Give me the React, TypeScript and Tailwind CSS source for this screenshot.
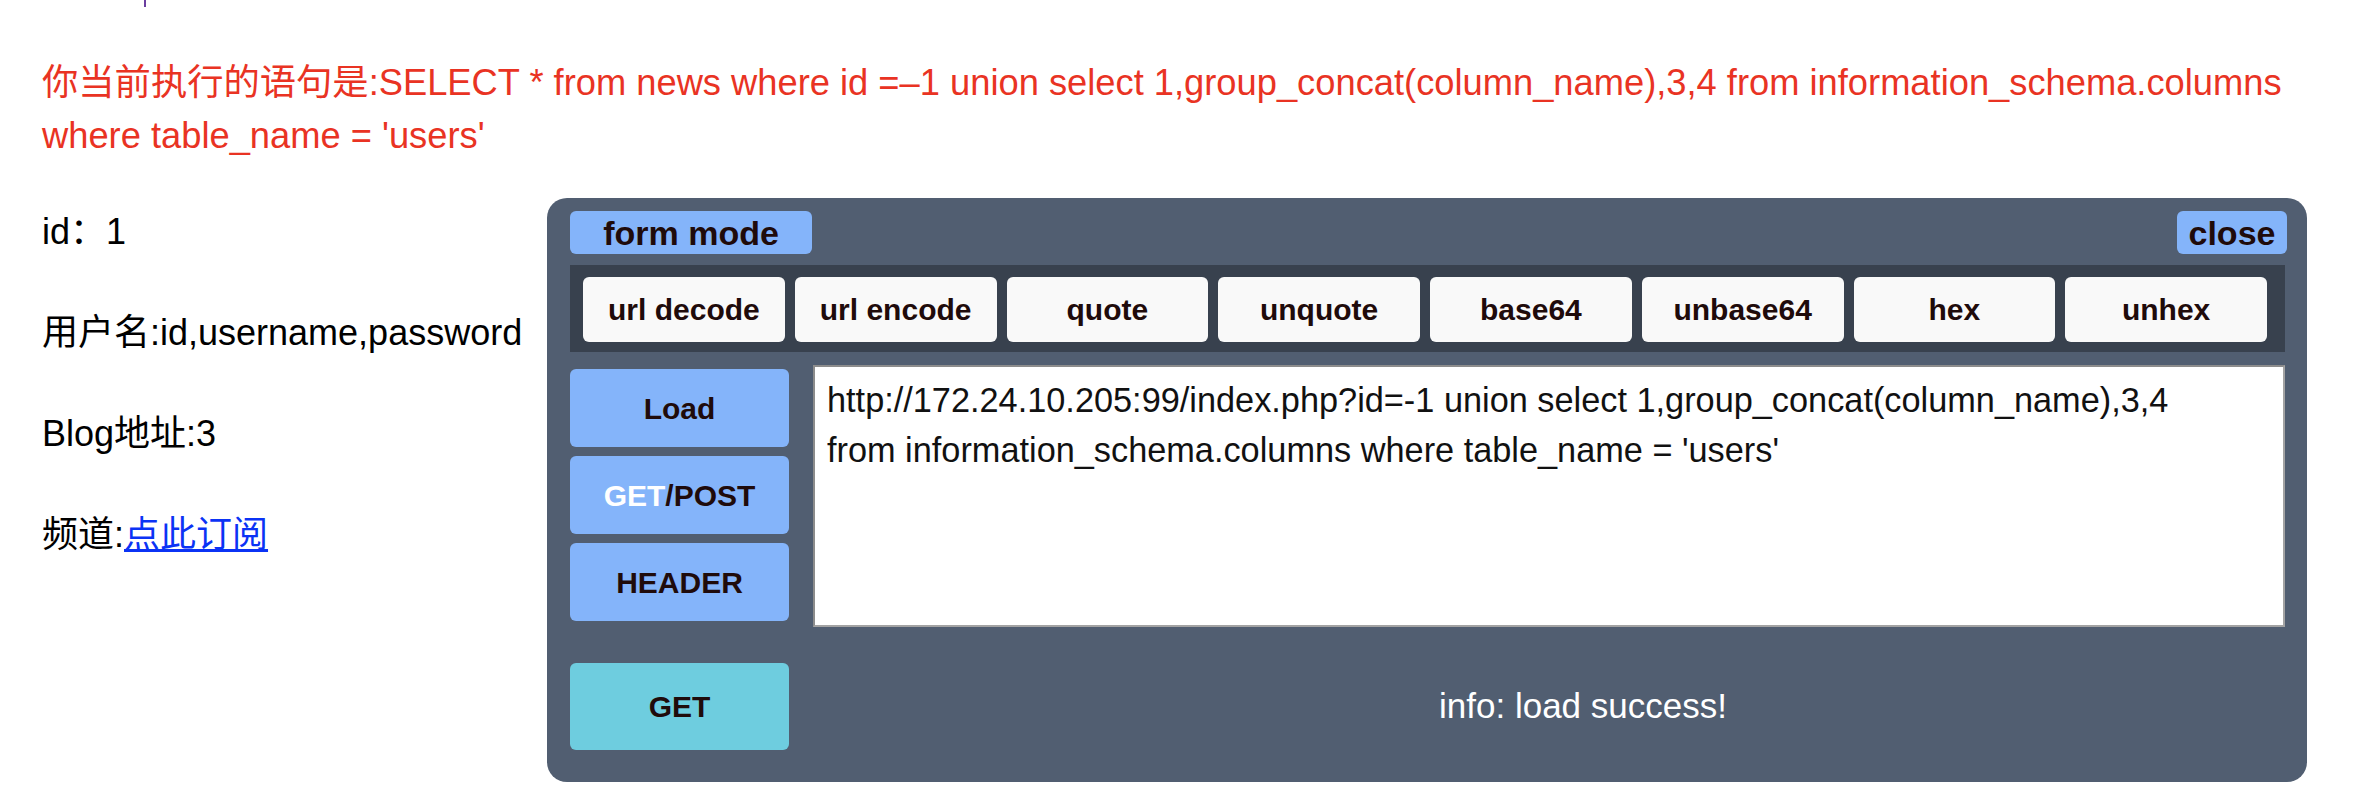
import React from 'react'

const encoders = ['url decode', 'url encode', 'quote', 'unquote', 'base64', 'unbase64', 'hex', 'unhex']

const url =
  "http://172.24.10.205:99/index.php?id=-1 union select 1,group_concat(column_name),3,4 from information_schema.columns where table_name = 'users'"

function BlueButton({ children }: { children: React.ReactNode }) {
  return (
    <button className="h-[78px] w-full rounded-[6px] bg-[#84b4fa] text-[30px] font-bold text-[#1f0b0b]">
      {children}
    </button>
  )
}

export default function App() {
  return (
    <div className="min-h-screen bg-white font-['Liberation_Sans','Noto_Sans_CJK_SC',sans-serif] text-black">
      {/* cut-off descender from the line above */}
      <div className="h-[7px] pl-[144px]">
        <div className="h-[7px] w-[2px] bg-[#6b3fa0]" />
      </div>

      <p className="mt-[49px] pl-[42px] pr-[60px] text-[36.3px] leading-[53px] text-[#e93323]">
        你当前执行的语句是:SELECT * from news where id =–1 union select 1,group_concat(column_name),3,4 from
        information_schema.columns where table_name = 'users'
      </p>

      <div className="mt-[36px] flex items-start">
        {/* query result */}
        <div className="flex w-[547px] flex-col gap-[48px] pl-[42px] pt-[7px] text-[36px] leading-[53px]">
          <p>id：1</p>
          <p>用户名:id,username,password</p>
          <p>Blog地址:3</p>
          <p>
            频道:
            <a href="#" className="text-[#0b33f5] underline">
              点此订阅
            </a>
          </p>
        </div>

        {/* hackbar panel */}
        <div className="w-[1760px] rounded-[20px] bg-[#515e71] pb-[32px] pl-[23px] pr-[22px] pt-[13px]">
          <div className="flex h-[43px] justify-between">
            <button className="w-[242px] rounded-[6px] bg-[#84b4fa] text-[34px] font-bold leading-none text-[#1f0b0b]">
              form mode
            </button>
            <button className="-mr-[2px] w-[110px] rounded-[6px] bg-[#84b4fa] text-[34px] font-bold leading-none text-[#1f0b0b]">
              close
            </button>
          </div>

          <div className="mt-[11px] grid h-[87px] grid-cols-8 gap-[10px] bg-[#38414e] pb-[10px] pl-[13px] pr-[18px] pt-[12px]">
            {encoders.map((label) => (
              <button
                key={label}
                className="h-[65px] rounded-[6px] bg-[#f9f9f9] text-[30px] font-bold text-[#1f0b0b]"
              >
                {label}
              </button>
            ))}
          </div>

          <div className="mt-[13px] flex gap-[24px]">
            <div className="flex w-[219px] shrink-0 flex-col gap-[9px] pt-[4px]">
              <BlueButton>Load</BlueButton>
              <BlueButton>
                <span className="text-white">GET</span>/POST
              </BlueButton>
              <BlueButton>HEADER</BlueButton>
            </div>
            <textarea
              defaultValue={url}
              spellCheck={false}
              className="h-[262px] flex-1 resize-none border-2 border-[#a3a3a3] border-l-[#8c8c8c] border-t-[#8c8c8c] bg-white pl-[12px] pr-[65px] pt-[8px] text-[34.3px] leading-[50px] text-[#111] outline-none"
            />
          </div>

          <div className="mt-[36px] flex items-center">
            <button className="h-[87px] w-[219px] shrink-0 rounded-[6px] bg-[#6ecddf] text-[30px] font-bold text-[#1f0b0b]">
              GET
            </button>
            <div className="flex-1 pl-[92px] text-center text-[35px] text-white">info: load success!</div>
          </div>
        </div>
      </div>
    </div>
  )
}
